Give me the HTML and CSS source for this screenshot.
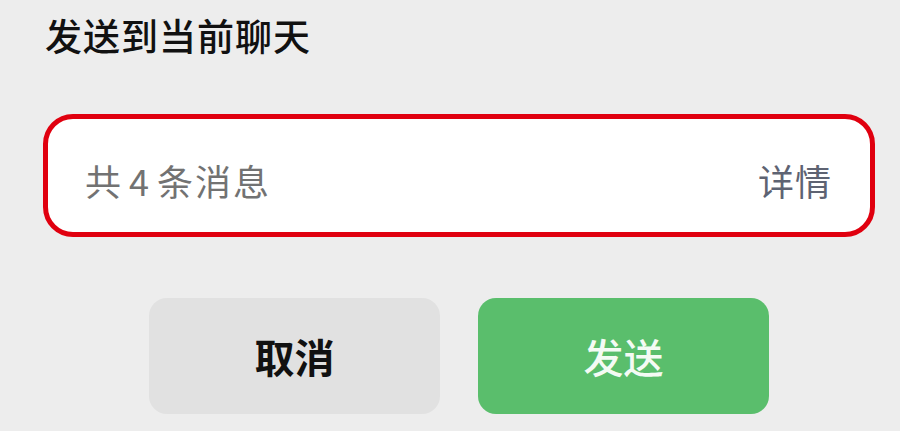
FILE: index.html
```html
<!DOCTYPE html>
<html lang="zh-CN">
<head>
<meta charset="utf-8">
<link rel="stylesheet" href="styles.css">
</head>
<body>
<div class="sheet">
  <h1 class="title">发送到当前聊天</h1>
  <div class="summary">
    <span class="count">共 4 条消息</span>
    <span class="detail">详情</span>
  </div>
  <div class="actions">
    <button class="btn btn-cancel">取消</button>
    <button class="btn btn-send">发送</button>
  </div>
</div>
</body>
</html>
```

FILE: styles.css
```css
html, body {
  margin: 0;
  padding: 0;
  background: #ededed;
  width: 900px;
  height: 431px;
  overflow: hidden;
}
body {
  font-family: "Noto Sans CJK SC", "Noto Sans", sans-serif;
}
.sheet {
  padding: 11px 25px 0 43px;
  display: flex;
  flex-direction: column;
}
.title {
  margin: 0 0 0 2px;
  font-size: 37px;
  line-height: 48px;
  font-weight: 500;
  color: #111;
  letter-spacing: 1px;
}
.summary {
  margin-top: 55px;
  height: 123px;
  border: 5px solid #e0000f;
  border-radius: 30px;
  background: #fff;
  display: flex;
  align-items: center;
  justify-content: space-between;
  padding: 8px 38px 0 37px;
  box-sizing: border-box;
}
.count {
  font-size: 36px;
  letter-spacing: 2px;
  word-spacing: -4px;
  color: #727272;
}
.detail {
  font-size: 36px;
  letter-spacing: 1px;
  color: #5e6372;
}
.actions {
  margin-top: 61px;
  display: flex;
  justify-content: center;
  gap: 38px;
}
.btn {
  width: 291px;
  height: 116px;
  border: none;
  border-radius: 18px;
  font-family: "Noto Sans CJK SC", "Noto Sans", sans-serif;
  font-size: 40px;
  padding: 0;
}
.btn-cancel {
  background: #e1e1e1;
  color: #111;
  font-weight: 600;
}
.btn-send {
  background: #5abe6c;
  color: #f4fbf4;
  font-weight: 500;
}
```
